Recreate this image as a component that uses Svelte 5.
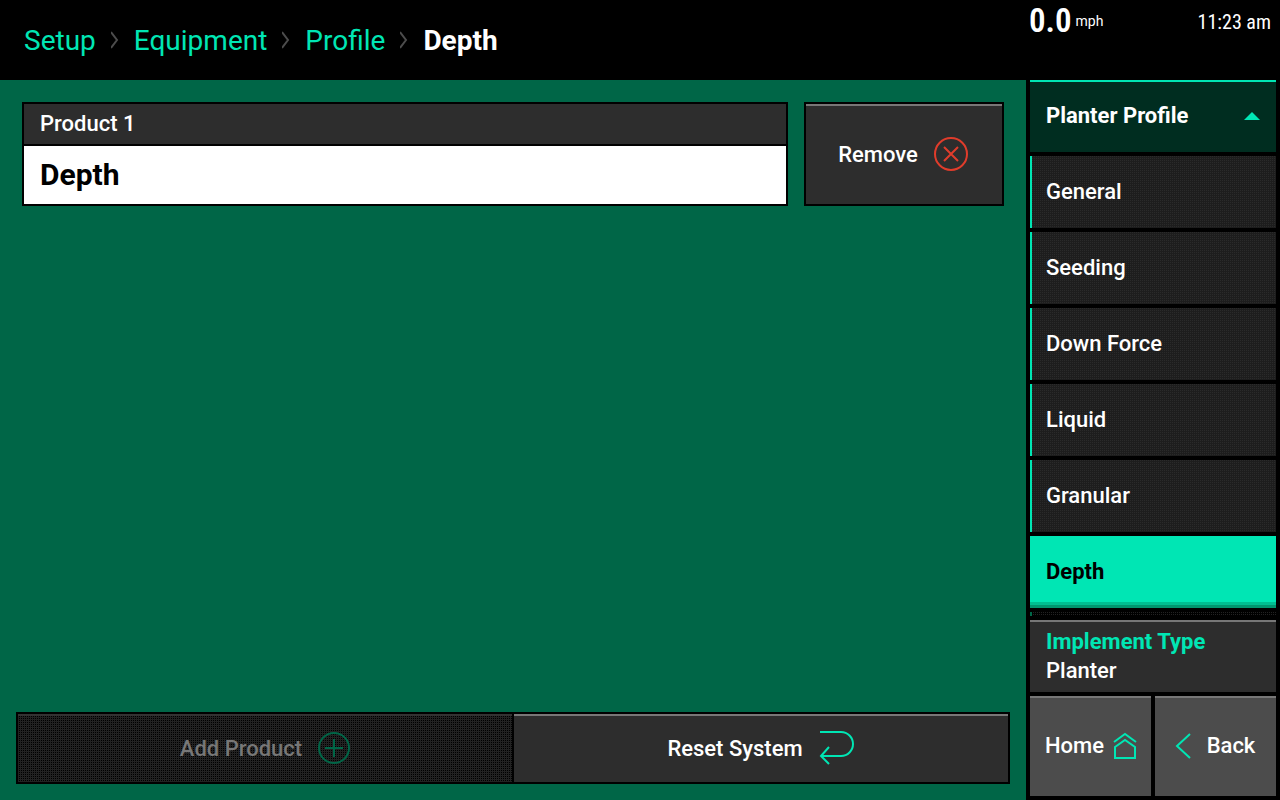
<script lang="ts">
  const crumbs = ['Setup', 'Equipment', 'Profile'];
  const sections = ['General', 'Seeding', 'Down Force', 'Liquid', 'Granular', 'Depth'];

  let products = $state(['Depth']);
  let current = $state('Depth');
  let open = $state(true);

  function removeProduct(index: number) {
    products.splice(index, 1);
  }
</script>

<div class="screen">
  <header class="topbar">
    <nav class="crumbs" aria-label="Breadcrumb">
      {#each crumbs as crumb}
        <a href="#{crumb.toLowerCase()}">{crumb}</a>
        <svg class="sep" width="8" height="18" viewBox="0 0 8 18" aria-hidden="true">
          <path d="M0 1 L6 9 L0 17" />
        </svg>
      {/each}
      <h1>Depth</h1>
    </nav>
    <div class="status">
      <span class="speed">0.0</span>
      <span class="unit">mph</span>
      <time class="clock">11:23 am</time>
    </div>
  </header>

  <div class="body">
    <main>
      <div class="products">
        {#each products as product, i}
          <div class="row">
            <div class="product">
              <div class="label">Product {i + 1}</div>
              <div class="value">{product}</div>
            </div>
            <button class="dark remove" onclick={() => removeProduct(i)}>
              Remove
              <svg class="red" width="34" height="34" viewBox="0 0 34 34" aria-hidden="true">
                <circle cx="17" cy="17" r="16" />
                <path d="M10 10 L24 24 M24 10 L10 24" />
              </svg>
            </button>
          </div>
        {/each}
      </div>

      <div class="actions">
        <button class="dark add" disabled>
          Add Product
          <svg width="32" height="32" viewBox="0 0 32 32" aria-hidden="true">
            <circle cx="16" cy="16" r="15" />
            <path d="M16 7 V25 M7 16 H25" />
          </svg>
        </button>
        <button class="dark reset" onclick={() => (products = ['Depth'])}>
          Reset System
          <svg width="36" height="36" viewBox="0 0 36 36" aria-hidden="true">
            <path d="M1 2 H22 A12 12 0 0 1 22 26 H2 M10 17 L2 26 L10 34" />
          </svg>
        </button>
      </div>
    </main>

    <aside>
      <button class="profile" aria-expanded={open} onclick={() => (open = !open)}>
        Planter Profile
        <svg class="arrow" class:closed={!open} width="16" height="8" viewBox="0 0 16 8" aria-hidden="true">
          <path d="M8 0 L16 8 H0 Z" />
        </svg>
      </button>
      <div class="menu">
        {#if open}
          {#each sections as section}
            <button
              class="item"
              class:active={section === current}
              onclick={() => (current = section)}
            >
              {section}
            </button>
          {/each}
        {/if}
      </div>
      <!-- sliver of the list that continues behind the implement button -->
      <div class="more"></div>
      <button class="dark implement">
        <strong>Implement Type</strong>
        <span>Planter</span>
      </button>
      <div class="bottom">
        <button class="grey">
          Home
          <svg width="24" height="28" viewBox="0 0 24 28" aria-hidden="true">
            <path d="M2 10 L13 2 L24 10 M3 15 L13 8 L23 15 V26 H3 Z" />
          </svg>
        </button>
        <button class="grey back">
          <svg width="16" height="28" viewBox="0 0 16 28" aria-hidden="true">
            <path d="M14 2 L1 14 L14 26" />
          </svg>
          Back
        </button>
      </div>
    </aside>
  </div>
</div>

<style>
  :global(body) {
    margin: 0;
    background: #000;
  }
  .screen {
    display: flex;
    flex-direction: column;
    min-height: 100vh;
    background: #000;
    color: #fff;
    font-family: Roboto, 'Liberation Sans', sans-serif;
    font-size: 22px;
    font-weight: 500;
    line-height: 28px;
  }
  button {
    box-sizing: border-box;
    margin: 0;
    padding: 0;
    border: 0;
    border-radius: 0;
    color: inherit;
    font: inherit;
    cursor: pointer;
  }
  svg {
    flex: none;
    fill: none;
    stroke: #00e6b4;
    stroke-width: 2;
  }
  .topbar {
    display: flex;
    justify-content: space-between;
    height: 80px;
  }
  .crumbs {
    display: flex;
    align-items: center;
    gap: 15px;
    padding-left: 24px;
    font-size: 28px;
    line-height: 33px;
  }
  .crumbs a {
    color: #00e6b4;
    font-weight: 400;
    text-decoration: none;
  }
  .crumbs h1 {
    margin: 0;
    font-size: 28px;
    font-weight: 700;
  }
  .sep {
    stroke: #4c4c4c;
  }
  .status {
    display: flex;
    align-items: flex-start;
    box-sizing: border-box;
    width: 254px;
    padding: 3px 9px 0 3px;
    font-weight: 400;
    line-height: 36px;
  }
  .speed,
  .clock {
    font-family: 'Roboto Condensed', Roboto, sans-serif;
  }
  .speed {
    font-size: 33px;
    font-weight: 600;
  }
  .unit {
    margin-left: 4px;
    font-size: 14px;
  }
  .clock {
    margin-left: auto;
    font-size: 20px;
    line-height: 38px;
  }
  .body {
    display: flex;
    flex: 1;
  }
  main {
    display: flex;
    flex: 1;
    flex-direction: column;
    justify-content: space-between;
    padding: 22px 16px 16px;
    background: #006647;
  }
  .products {
    display: flex;
    flex-direction: column;
    gap: 16px;
    padding: 0 6px;
  }
  .row {
    display: flex;
    gap: 16px;
    height: 104px;
  }
  .product {
    display: flex;
    flex: 1;
    flex-direction: column;
    border: 2px solid #000;
  }
  .label {
    padding: 6px 16px;
    border-bottom: 2px solid #000;
    background: #2d2d2d;
  }
  .value {
    flex: 1;
    padding: 0 16px;
    background: #fff;
    color: #000;
    font-size: 30px;
    font-weight: 700;
    line-height: 58px;
  }
  .dark {
    display: flex;
    align-items: center;
    justify-content: center;
    gap: 16px;
    background: #2d2d2d;
    box-shadow: inset 0 2px #777;
    line-height: 29px;
  }
  .remove {
    width: 200px;
    padding-right: 2px;
    border: 2px solid #000;
  }
  .red {
    stroke: #e03c2b;
  }
  .actions {
    display: flex;
    gap: 2px;
    height: 68px;
    padding: 2px;
    background: #000;
  }
  .actions button {
    flex: 1;
  }
  .add {
    background: conic-gradient(#000 25%, #222 0) 0 0 / 2px 2px;
    box-shadow: inset 0 2px #333;
    color: #777;
    cursor: default;
  }
  .add svg {
    stroke: #006647;
  }
  aside {
    display: flex;
    flex-direction: column;
    box-sizing: border-box;
    width: 254px;
    padding: 0 4px 4px;
  }
  .profile {
    display: flex;
    align-items: center;
    justify-content: space-between;
    height: 72px;
    padding: 0 16px 2px;
    border-top: 2px solid #00e6b4;
    background: #002d20;
    font-weight: 700;
  }
  .arrow {
    fill: #00e6b4;
    stroke: none;
  }
  .closed {
    transform: rotate(180deg);
  }
  .menu {
    display: flex;
    flex: 1;
    flex-direction: column;
    gap: 4px;
    padding-top: 4px;
  }
  .item {
    height: 72px;
    padding: 0 14px;
    border-left: 2px solid #00e6b4;
    background: conic-gradient(#1d1d1d 75%, #2a2a2a 0) 0 0 / 2px 2px;
    text-align: left;
  }
  .active {
    padding: 0 16px;
    border-left: 0;
    background: #00e6b4;
    box-shadow: inset 0 -3px #00966f, inset 0 -6px #00be91;
    color: #000;
    font-weight: 700;
  }
  .more {
    height: 4px;
    margin: 4px 0;
    border-left: 2px solid #006647;
    background: conic-gradient(#222 25%, #000 0) 0 0 / 2px 2px;
  }
  .implement {
    flex-direction: column;
    align-items: flex-start;
    gap: 0;
    height: 72px;
    padding: 0 16px;
  }
  .implement strong {
    color: #00e6b4;
    font-weight: 700;
  }
  .bottom {
    display: flex;
    gap: 4px;
    height: 100px;
    margin-top: 4px;
  }
  .grey {
    display: flex;
    flex: 1;
    align-items: center;
    justify-content: center;
    gap: 8px;
    background: #4c4c4c;
    box-shadow: inset 0 2px #777;
  }
  .grey svg {
    overflow: visible;
  }
  .back {
    gap: 15px;
  }
</style>
